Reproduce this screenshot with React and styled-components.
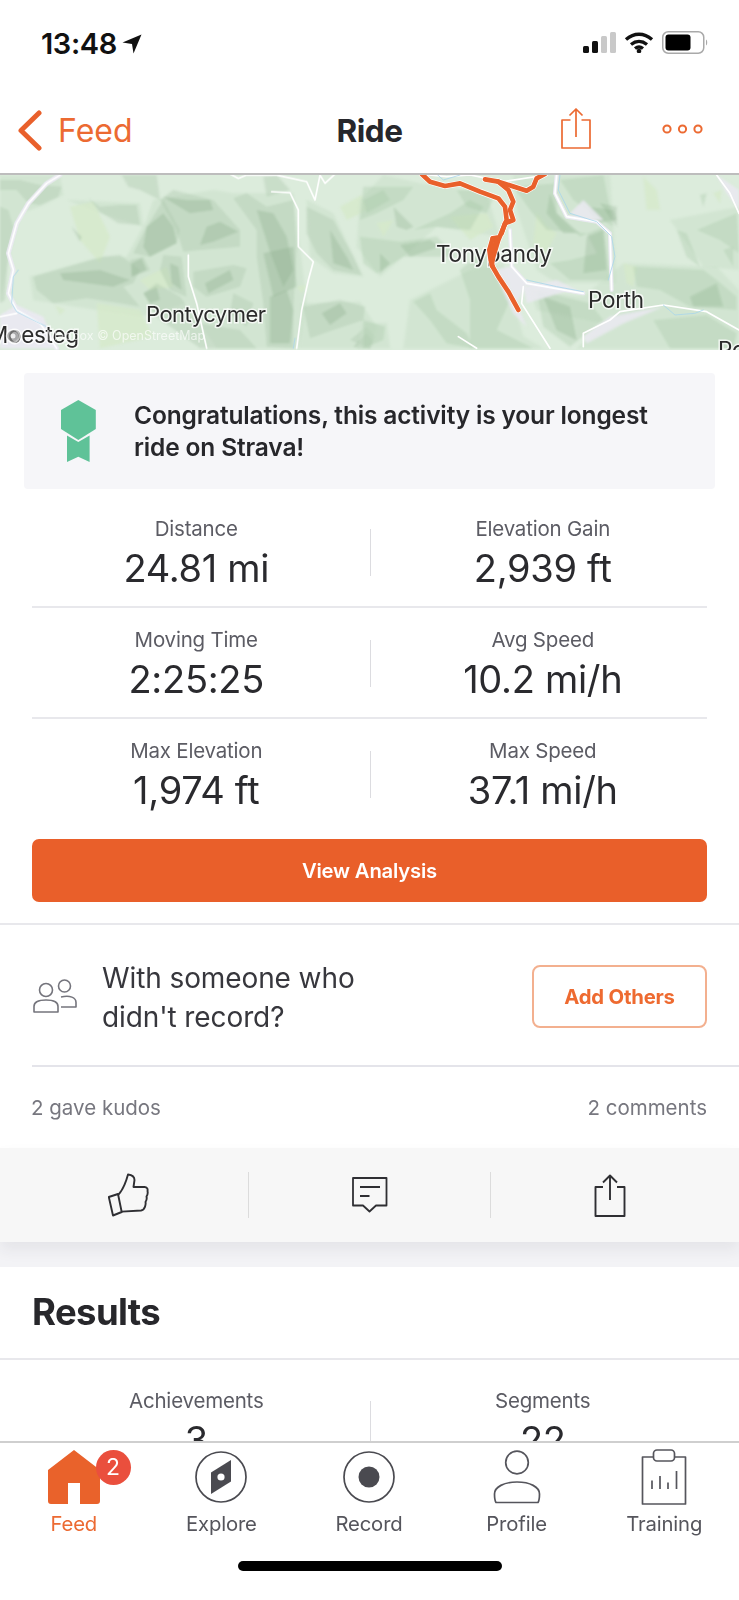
import React from 'react';
import styled, { createGlobalStyle } from 'styled-components';

const Global = createGlobalStyle`
  html, body { margin: 0; padding: 0; background: #fff; }
  * { box-sizing: border-box; }
`;
const ORANGE = '#e95f2a';
const Phone = styled.div`
  width: 739px; height: 1600px; background: #fff; display: flex; flex-direction: column; overflow: hidden;
  font-family: Inter, "Noto Sans", sans-serif; color: #2a2a2e;
`;
const StatusBar = styled.div`
  height: 90px; flex: none; display: flex; justify-content: space-between; align-items: flex-start;
  padding: 27px 31px 0 41px;
`;
const Clock = styled.div`
  display: flex; align-items: center; gap: 5px; font-size: 29px; line-height: 34px; font-weight: 600; color: #111; letter-spacing: -0.4px;
`;
const StatusIcons = styled.div`display: flex; align-items: center; gap: 8px; margin-top: 4px;`;
const NavBar = styled.div`
  height: 83px; flex: none; display: grid; grid-template-columns: 1fr auto 1fr; align-items: center; padding: 0 18px 2px;
`;
const BackLink = styled.div`
  display: flex; align-items: center; gap: 16px; color: #ec6a32; font-size: 32px; line-height: 40px;
`;
const NavTitle = styled.div`font-size: 31.5px; line-height: 40px; font-weight: 700; color: #27272b; letter-spacing: -0.5px;`;
const NavActions = styled.div`display: flex; justify-content: flex-end; align-items: center; gap: 71px; margin-top: -4px; padding-right: 18px;`;
const MapFrame = styled.div`
  height: 177px; flex: none; border-top: 2px solid #bdbdbd; background: #dcecdc; overflow: hidden;
  svg { display: block; }
`;
const Scroll = styled.div`flex: 1; min-height: 0; overflow: hidden; background: #fff;`;
const Banner = styled.div`
  margin: 23px 24px 0; height: 116px; background: #f6f6f9; border-radius: 4px; display: flex; align-items: center; padding: 0 30px 0 37px; gap: 38px;
`;
const BannerText = styled.div`font-size: 24.5px; line-height: 32px; font-weight: 600; color: #27272b; letter-spacing: -0.15px;`;
const Stats = styled.div`margin: 8px 32px 0;`;
const StatRow = styled.div`
  height: ${p => p.$h || 111}px; padding-top: ${p => p.$pt ?? 18}px;
  border-bottom: ${p => (p.$last ? 'none' : '2px solid #e8e8ec')};
`;
const StatPair = styled.div`display: grid; grid-template-columns: 1fr 1fr; margin: 0 -9px;`;
const StatCell = styled.div`
  display: flex; flex-direction: column; align-items: center; text-align: center;
  & + & { position: relative; }
  & + &::before { content: ''; position: absolute; left: 0; top: 14px; height: 47px; width: 1px; background: #dcdce0; }
`;
const StatLabel = styled.div`font-size: 20.5px; line-height: 28px; color: #5c5c64; letter-spacing: -0.2px;`;
const StatValue = styled.div`font-size: 38px; line-height: 46px; color: #2a2a2e; letter-spacing: -0.3px; margin-top: 2px;`;
const PrimaryButton = styled.div`
  margin: 0 32px; height: 63px; background: ${ORANGE}; border-radius: 7px; display: flex; align-items: center; justify-content: center;
  color: #fff; font-size: 20.3px; font-weight: 600; letter-spacing: -0.2px;
`;
const FullRule = styled.div`height: 2px; background: #e8e8ec; margin-top: ${p => p.$top || 0}px;`;
const RecordRow = styled.div`display: flex; align-items: center; margin: 0 0 0 32px; height: 142px; border-bottom: 2px solid #e4e4ea; padding: 2px 32px 0 1px;`;
const RecordText = styled.div`flex: 1; margin: 3px 0 0 25px; font-size: 28px; line-height: 39px; color: #37373d; letter-spacing: -0.1px;`;
const OutlineButton = styled.div`
  width: 175px; height: 63px; border: 2px solid #f3b08f; border-radius: 8px; display: flex; align-items: center; justify-content: center;
  color: #ee6a30; font-size: 20.3px; font-weight: 700; letter-spacing: -0.2px;
`;
const CountRow = styled.div`display: flex; justify-content: space-between; align-items: center; height: 81px; padding: 0 32px 1px 31px; font-size: 20.5px; color: #77777f;`;
const ActionBar = styled.div`
  height: 94px; background: #f7f7f7; display: grid; grid-template-columns: 248px 242px 1fr; align-items: center;
  box-shadow: 0 8px 14px rgba(40,40,60,.07); position: relative;
`;
const ActionSlot = styled.div`
  height: 46px; display: flex; align-items: center; justify-content: center;
  padding: 0 ${p => p.$pr || 0}px 0 ${p => p.$pl || 0}px;
  border-left: ${p => (p.$first ? 'none' : '1px solid #dcdcdc')};
`;
const SectionGap = styled.div`height: 25px; background: #f3f3f6;`;
const ResultsHead = styled.div`height: 93px; display: flex; align-items: center; padding: 0 32px 2px; font-size: 36.5px; font-weight: 700; color: #27272b; letter-spacing: -0.6px; border-bottom: 2px solid #e8e8ec;`;
const TabBar = styled.div`
  flex: none; height: 159px; border-top: 2px solid #cfcfcf; background: #fff; display: flex; flex-direction: column;
`;
const Tabs = styled.div`display: grid; grid-template-columns: repeat(5, 147.6px); padding-top: 5px;`;
const Tab = styled.div`
  display: flex; flex-direction: column; align-items: center; color: ${p => (p.$active ? '#ec6a32' : '#55555c')};
  font-size: 20.3px; line-height: 26px; letter-spacing: -0.15px; position: relative;
`;
const TabIcon = styled.div`height: 58px; display: flex; align-items: center; justify-content: center; margin-bottom: 5px;`;
const Badge = styled.div`
  position: absolute; left: 95.5px; top: 2px; width: 35px; height: 35px; border-radius: 50%; background: #ea4f3d; color: #fff;
  font-size: 23px; line-height: 35px; text-align: center;
`;
const HomeIndicator = styled.div`width: 264px; height: 10px; border-radius: 5px; background: #000; margin: 22px auto 0; position: relative; top: 2px;`;

const polys = (list, fill, op) => list.map((p, i) => <polygon key={i} points={p} fill={fill} opacity={op} />);
const lines = (list, color, w) => list.map((p, i) => <polyline key={i} points={p} fill="none" stroke={color} strokeWidth={w} strokeLinejoin="round" strokeLinecap="round" />);

const L_SOFT = ['0,15 180,15 190,75 120,110 60,130 30,250 0,400','460,90 640,60 700,70 880,70 900,230 920,400 900,535 650,535 560,400 420,440 100,390 90,320 300,260 380,260 440,150','920,90 1000,130 1090,320 1000,310 930,260','900,400 1080,395 1130,470 1110,535 900,535','200,90 420,100 430,170 300,130'];
const L_MID = ['0,30 60,30 120,45 185,50 175,80 120,105 85,100 50,60 0,60','0,110 25,120 40,170 25,240 15,390 0,400','265,85 300,110 360,105 410,105 420,165 355,160 300,125','365,15 470,15 480,90 420,60 385,50','480,90 520,60 640,90 720,180 720,230 600,240 550,245 530,180','440,170 490,90 540,180 530,220 450,260 400,250','100,320 310,260 360,255 420,300 400,340 370,350 420,410 360,400 260,385 160,400 110,360','390,270 430,260 450,300 395,320','490,255 545,260 560,380 510,360 480,300','580,305 700,285 740,295 720,350 620,380 580,350','700,85 740,70 800,110 880,90 890,230 880,420 880,535 800,530 790,400 770,260 770,180','920,110 1000,150 1060,260 1085,315 1000,300 950,250 920,190','910,410 1020,390 1095,410 1090,450 1000,480 930,505','430,370 470,340 540,380 600,460 720,480 770,535 600,535 470,440','1050,510 1100,470 1125,500 1110,535','700,370 760,400 740,470 690,430','790,20 830,15 870,60 800,80'];
const L_DARK = ['440,170 490,130 520,170 530,220 450,260 430,230','620,170 660,155 715,185 640,215 600,225','490,80 560,90 630,90 640,120 570,130 520,100','180,310 300,300 390,330 340,350 190,330','395,280 425,265 440,300 395,320','510,280 535,290 545,360 515,340','615,340 690,300 700,330 625,370','770,120 820,130 860,200 880,300 850,350 810,245','790,250 880,230 890,350 820,380','990,180 1040,260 1060,300 1000,280','965,430 1020,400 1040,430 990,465','810,380 860,360 880,420 870,520 810,520','430,370 470,350 480,390 450,400','215,170 245,200 240,215','1060,530 1100,490 1120,515 1110,535'];
const L_LIGHT = ['210,110 280,95 330,200 300,280 240,210','1020,110 1085,75 1105,120 1040,150','290,400 420,420 460,500 300,535','420,330 500,290 520,350 450,360','890,350 920,345 905,370','165,405 195,420 180,435'];
const R_SOFT = ['40,15 150,40 350,70 390,200 200,170 100,260 30,320 -40,230 -30,90','300,300 400,280 460,500 520,535 100,535 120,390','430,15 720,15 740,340 560,340 500,300 440,120','760,280 1040,290 1107,360 1107,535 780,535 620,535 700,460 500,420 480,360 640,380','900,150 1107,110 1107,300 1000,290','-20,460 50,460 60,535 -40,535'];
const R_MID = ['-20,50 130,50 100,90 20,130 -30,150','-30,200 90,215 200,200 260,260 200,260 100,260 20,310 -20,280','130,180 240,130 300,90 340,110 300,180 200,170','270,300 340,240 430,370 380,480 490,535 300,535 300,390','130,395 180,370 200,420 290,490 310,535 230,520 180,450','-20,450 45,470 40,510 -20,535','430,50 560,40 560,130 630,200 700,170 720,330 600,330 540,280 600,270 680,250 650,190 530,180 480,120','500,360 660,400 700,450 600,530 520,470','570,30 700,15 730,170 660,130 610,90','790,290 1000,300 1040,330 1100,380 1100,420 960,410 870,360 800,350','920,180 950,190 990,290 950,260','980,180 1100,130 1107,250 1050,210','850,450 1010,435 1100,490 1090,535 900,535','1060,240 1090,230 1090,290','990,75 1010,70 1000,110','-20,90 40,60 60,90 -10,130','260,60 320,60 370,85 350,130 290,110'];
const R_DARK = ['70,110 130,170 110,180 80,170','90,225 180,210 210,230 120,260','30,250 60,280 30,310','650,110 730,120 740,150 680,160','540,70 560,130 630,190 580,190 530,130','650,200 700,180 710,300 640,310','520,380 600,410 620,510 560,480','960,380 1040,340 1060,410 970,410','690,100 740,110 740,170'];
const R_LIGHT = ['240,140 350,130 370,170 300,210','500,130 530,170 560,190 520,260 490,220','820,20 860,60 870,120 830,120','1030,70 1055,60 1050,100','760,280 800,290 790,350 770,340','20,160 70,150 40,200'];
const R_URBAN = ['370,300 420,290 470,340 440,400 470,470 430,430','460,350 560,330 640,370 600,360 470,400','640,500 720,440 880,410 760,460 650,520','1040,15 1107,60 1107,120 1070,70','600,130 640,90 680,130 700,150 640,150'];
const L_ROADS = ['180,15 140,40 85,100 50,160 25,250 40,300 25,370 50,420 120,460 170,535','815,65 870,68 895,120 895,230 940,275 925,330 905,420 890,535','565,255 565,320 590,400 620,535','690,12 715,25 740,15 830,15 920,35 945,90 960,15 975,40 1005,12','0,440 50,430'];
const R_ROADS = ['560,15 555,70 590,140 680,155 720,190 725,360','420,180 425,290 470,340 640,370','460,350 455,400 540,535','640,530 640,490 720,450 750,425 880,405 1010,425 1107,480','1040,15 1080,70 1107,130','265,500 320,535','150,12 230,20 300,15 400,35 530,15'];
const ROUTE = ['155,12 180,35 225,48 270,40 330,65 385,85 405,110 410,150 385,210 370,260 365,285 385,320 415,365 445,420','345,28 385,35 415,60 430,95 420,120 430,150 405,160 395,190','385,35 470,62 490,50 500,25 525,12','368,205 382,203 370,240 365,262','368,205 358,240 362,270 368,290'];

const MapArt = () => (
  <svg width="739" height="175" viewBox="0 175 739 175" role="img" aria-label="Route map">
    <defs><filter id="soft" x="-5%" y="-5%" width="110%" height="110%"><feGaussianBlur stdDeviation="3" /></filter></defs>
    <rect x="0" y="173" width="739" height="177" fill="#dcecdc" />
    <g transform="translate(0 170) scale(.3333)">
      <g filter="url(#soft)">
        {polys(L_SOFT, '#cbe0cb', .55)}
        {polys(L_LIGHT, '#d6eacb', .8)}
        {polys(L_MID, '#a8c6a8', .36)}
        {polys(L_DARK, '#7ea37f', .26)}
        <polygon points="0,435 50,405 130,440 170,535 0,535" fill="#e9e9f0" />
      </g>
      {lines(L_ROADS.slice(0, 1), '#eaeaf1', 14)}
      {lines(L_ROADS, '#ffffff', 5)}
      {lines(['55,300 40,320 35,400 50,425 110,455 140,470','885,505 880,535'], '#a9d6ea', 2.5)}
    </g>
    <g transform="translate(370 170) scale(.3333)">
      <g filter="url(#soft)">
        {polys(R_SOFT, '#cbe0cb', .55)}
        {polys(R_LIGHT, '#d6eacb', .8)}
        {polys(R_MID, '#a8c6a8', .34)}
        {polys(R_DARK, '#7ea37f', .25)}
        {polys(R_URBAN, '#e9e9f0', .9)}
      </g>
      {lines(R_ROADS.slice(0, 2), '#eaeaf1', 12)}
      {lines(R_ROADS, '#ffffff', 5)}
      {lines(['570,15 565,60 600,130 680,155 725,200 735,260 715,330','470,330 560,350 640,365','880,405 915,435 975,430 1000,420','200,12 220,30 270,15'], '#a9d6ea', 2.5)}
    </g>
    <MapLabel x="146" y="322" size="22" ls="-.5">Pontycymer</MapLabel>
    <MapLabel x="436" y="262" size="22.5">Tonypandy</MapLabel>
    <MapLabel x="588" y="308" size="22.5">Porth</MapLabel>
    <MapLabel x="718" y="358" size="22.5">Po</MapLabel>
    <MapLabel x="-12" y="343" size="22.5">Moesteg</MapLabel>
    <circle cx="13" cy="336" r="6.5" fill="#8b8b8b" opacity=".7" stroke="#fff" strokeWidth="1.5" />
    <circle cx="13" cy="336" r="2.5" fill="#fff" opacity=".8" />
    <text x="46" y="340" fontFamily="Inter, sans-serif" fontSize="12.5" fill="#fff" opacity=".65">Mapbox © OpenStreetMap</text>
    <g transform="translate(370 170) scale(.3333)">
      {lines(ROUTE, '#ffffff', 18)}
      {lines(ROUTE, '#e9602b', 14)}
    </g>
  </svg>
);
function MapLabel({ x, y, size, ls = '-.3', children }) {
  return <text x={x} y={y} fontFamily="Inter, sans-serif" fontSize={size} fill="#2b2b2b" stroke="#fff" strokeWidth="3" strokeOpacity=".75" paintOrder="stroke" letterSpacing={ls}>{children}</text>;
}

const Ico = ({ w, h, children, vb }) => <svg width={w} height={h} viewBox={vb || `0 0 ${w} ${h}`} fill="none" style={{ display: 'block', flex: 'none' }}>{children}</svg>;

const ArrowIcon = () => <Ico w={20} h={20}><path d="M19.5 .5 L11.5 19.5 L10 10 L.5 8.5Z" fill="#111" /></Ico>;
const SignalIcon = () => <Ico w={33} h={21}><g fill="#111"><rect x="0" y="14" width="6" height="7" rx="1.5" /><rect x="9" y="9" width="6" height="12" rx="1.5" /></g><g fill="#c9c9c9"><rect x="18" y="4" width="6" height="17" rx="1.5" /><rect x="27" y="0" width="6" height="21" rx="1.5" /></g></Ico>;
const WifiIcon = () => <Ico w={30} h={21}><path d="M2 7.5C10 .5 20 .5 28 7.5M7 12.5C12 8.5 18 8.5 23 12.5M11 16.5C13.5 14.6 16.5 14.6 19 16.5" stroke="#111" strokeWidth="3.4" /><circle cx="15" cy="19" r="2.3" fill="#111" /></Ico>;
const BatteryIcon = () => <Ico w={46} h={23}><rect x=".75" y=".75" width="41" height="21.5" rx="5.5" stroke="#a9a9a9" strokeWidth="1.5" /><rect x="3.5" y="3.5" width="25" height="16" rx="3" fill="#000" /><path d="M44 8.5c1.6.6 1.6 5.4 0 6z" fill="#a9a9a9" /></Ico>;
const ChevronIcon = () => <Ico w={24} h={41}><path d="M21 3 3 20.5 21 38" stroke="#e9602b" strokeWidth="5" strokeLinecap="round" strokeLinejoin="round" /></Ico>;
const NavShareIcon = () => <Ico w={30} h={41}><path d="M9.5 12H1v28h28V12h-8.5M15 29V1M8.5 7.5 15 1l6.5 6.5" stroke="#ec6a32" strokeWidth="1.7" strokeLinejoin="round" /></Ico>;
const DotsIcon = () => <Ico w={41} h={10}><g stroke="#ec6a32" strokeWidth="2"><circle cx="5" cy="5" r="3.6" /><circle cx="20.5" cy="5" r="3.6" /><circle cx="36" cy="5" r="3.6" /></g></Ico>;
const MedalIcon = () => <Ico w={35} h={62}><path d="M17.3 0 34.8 10v19L17.3 40 0 29V10Z" fill="#5fc298" /><path d="M6 35.5 17.3 42 28.6 35.5V62L17.3 56.7 6 62Z" fill="#5fc298" /></Ico>;
const PeopleIcon = () => <Ico w={44} h={34}><g stroke="#74747c" strokeWidth="1.6"><circle cx="13" cy="11" r="6.5" /><circle cx="31.5" cy="7" r="6" /><path d="M1 27.5C1 23 6 21 13 21s12 2 12 6.5V33H1Z" strokeLinejoin="round" /><path d="M28 18c9-2 15 .5 15 5.5V28H28" strokeLinejoin="round" /></g></Ico>;
const ThumbIcon = () => <Ico w={42} h={44}><g stroke="#2f2f33" strokeWidth="1.9" strokeLinejoin="round"><path d="M.8 24 10 21 13.7 39 5 42.5Z" /><path d="M10 22C15 17 18 9 20 1.5 24 2 26.5 4 26.5 7L25.5 14H36.5C39 14 40 16 39.5 18 40 20 39.5 22 38.5 23.5 39 25.5 38.5 27.5 37.5 29 38 31 37 37 33 37.5L13.7 38.6" /></g></Ico>;
const CommentIcon = () => <Ico w={36} h={36}><path d="M1 1h33.5v27.5H24l-6.5 6-6.5-6H1ZM8 10h20M8 19h9.5" stroke="#2f2f33" strokeWidth="1.8" strokeLinejoin="round" /></Ico>;
const ShareIcon = () => <Ico w={32} h={43}><path d="M9 13H1.5v29H30.5V13H23M16 26V1.5M9 8.5l7-7 7 7" stroke="#2f2f33" strokeWidth="1.9" strokeLinejoin="round" /></Ico>;
const HomeIcon = () => <Ico w={52} h={54}><path d="M26 0 52 20V51a3 3 0 0 1-3 3H32V33H20V54H3a3 3 0 0 1-3-3V20Z" fill="#e9622b" /></Ico>;
const CompassIcon = () => <Ico w={52} h={52}><circle cx="26" cy="26" r="25" stroke="#4a4a50" strokeWidth="1.7" /><path d="M36 9V30.5L16 43V21.5Z" fill="#4a4a50" /><circle cx="26" cy="26" r="3.6" fill="#fff" /></Ico>;
const RecordIcon = () => <Ico w={52} h={52}><circle cx="26" cy="26" r="25" stroke="#4a4a50" strokeWidth="1.7" /><circle cx="26" cy="26" r="10.5" fill="#4a4a50" /></Ico>;
const ProfileIcon = () => <Ico w={48} h={54}><g stroke="#55555c" strokeWidth="1.7"><circle cx="24" cy="12.5" r="11.3" /><path d="M1.5 44C1.5 37 11 32 24 32S46.5 37 46.5 44C46.5 48 46 51 45 52.5H3C2 51 1.5 48 1.5 44Z" strokeLinejoin="round" /></g></Ico>;
const TrainingIcon = () => <Ico w={46} h={56}><g stroke="#55555c" strokeLinejoin="round" strokeWidth="1.7"><path d="M12 8H1.5V55H44.5V8H34" /><rect x="12.5" y="1" width="21" height="11" rx="3.5" /><path d="M11 40V31.5M19 40V27M27 40V33.5M35.5 40V22" /></g></Ico>;

const STATS = [
  [['Distance', '24.81 mi'], ['Elevation Gain', '2,939 ft']],
  [['Moving Time', '2:25:25'], ['Avg Speed', '10.2 mi/h']],
  [['Max Elevation', '1,974 ft'], ['Max Speed', '37.1 mi/h']],
];
const TABS = [
  ['Feed', HomeIcon], ['Explore', CompassIcon], ['Record', RecordIcon], ['Profile', ProfileIcon], ['Training', TrainingIcon],
];

export default function App() {
  return (
    <Phone>
      <Global />
      <StatusBar>
        <Clock>13:48 <ArrowIcon /></Clock>
        <StatusIcons><SignalIcon /><WifiIcon /><BatteryIcon /></StatusIcons>
      </StatusBar>
      <NavBar>
        <BackLink><ChevronIcon />Feed</BackLink>
        <NavTitle>Ride</NavTitle>
        <NavActions><NavShareIcon /><DotsIcon /></NavActions>
      </NavBar>
      <MapFrame><MapArt /></MapFrame>
      <Scroll>
        <Banner>
          <MedalIcon />
          <BannerText>Congratulations, this activity is your longest<br />ride on Strava!</BannerText>
        </Banner>
        <Stats>
          {STATS.map((row, i) => (
            <StatRow key={i} $last={i === 2} $h={i === 2 ? 120 : 111}>
              <StatPair>
                {row.map(([label, value]) => (
                  <StatCell key={label}>
                    <StatLabel>{label}</StatLabel>
                    <StatValue>{value}</StatValue>
                  </StatCell>
                ))}
              </StatPair>
            </StatRow>
          ))}
        </Stats>
        <PrimaryButton>View Analysis</PrimaryButton>
        <FullRule $top={21} />
        <RecordRow>
          <PeopleIcon />
          <RecordText>With someone who<br />didn't record?</RecordText>
          <OutlineButton>Add Others</OutlineButton>
        </RecordRow>
        <CountRow><span>2 gave kudos</span><span>2 comments</span></CountRow>
        <ActionBar>
          <ActionSlot $first $pl={9}><ThumbIcon /></ActionSlot>
          <ActionSlot><CommentIcon /></ActionSlot>
          <ActionSlot $pr={10}><ShareIcon /></ActionSlot>
        </ActionBar>
        <SectionGap />
        <ResultsHead>Results</ResultsHead>
        <Stats>
          <StatRow $last $pt={19}>
            <StatPair>
              <StatCell><StatLabel>Achievements</StatLabel><StatValue>3</StatValue></StatCell>
              <StatCell><StatLabel>Segments</StatLabel><StatValue>22</StatValue></StatCell>
            </StatPair>
          </StatRow>
        </Stats>
      </Scroll>
      <TabBar>
        <Tabs>
          {TABS.map(([label, Icon], i) => (
            <Tab key={label} $active={i === 0}>
              <TabIcon><Icon /></TabIcon>
              {label}
              {i === 0 && <Badge>2</Badge>}
            </Tab>
          ))}
        </Tabs>
        <HomeIndicator />
      </TabBar>
    </Phone>
  );
}
